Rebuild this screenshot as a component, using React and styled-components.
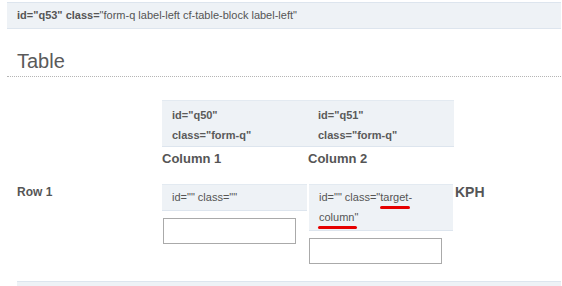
import React from "react";
import styled, { createGlobalStyle } from "styled-components";

const Global = createGlobalStyle`
  html, body { margin: 0; padding: 0; background: #fff; }
  body { font-family: "Liberation Sans", Arial, sans-serif; color: #555; }
`;

const Page = styled.div`
  padding: 2px 1px 0 7px;
  width: 554px;
  overflow: hidden;
  height: 284px;
`;

const InfoBar = styled.div`
  height: 25px;
  line-height: 25px;
  padding: 0 10px;
  background: #eef2f6;
  border-top: 1px solid #dde5ee;
  border-bottom: 1px solid #dde5ee;
  font-size: 11px;
  color: #555;
  white-space: nowrap;
`;

const Key = styled.b`
  font-weight: bold;
`;

const Heading = styled.h2`
  margin: 20px 0 0;
  padding: 0 10px 3px;
  font-size: 20px;
  line-height: 24px;
  font-weight: normal;
  color: #5a5a5a;
  border-bottom: 1px dotted #b5b5b5;
`;

const Body = styled.div`
  padding: 23px 0 0 10px;
`;

const Row = styled.div`
  display: flex;
  align-items: flex-start;
  margin-top: ${(p) => p.$top || 0}px;
`;

const RowLabel = styled.div`
  width: 145px;
  flex: none;
  font-size: 12px;
  line-height: 16px;
  font-weight: bold;
  color: #555;
`;

const Column = styled.div`
  width: 146px;
  flex: none;
  display: flex;
  flex-direction: column;
  align-items: flex-start;
`;

const HeadCell = styled.div`
  align-self: stretch;
  background: #eef2f6;
  border-top: 1px solid #e3eaf1;
  border-bottom: 1px solid #dde5ee;
  padding: 4px 10px 1px;
  font-size: 11px;
  line-height: 20px;
  font-weight: bold;
  color: #5a5a5a;
`;

const ColLabel = styled.div`
  padding-top: 3px;
  font-size: 13px;
  line-height: 18px;
  font-weight: bold;
  color: #555;
`;

const DataCell = styled.div`
  align-self: stretch;
  margin: ${(p) => (p.$first ? "0 1px 0 0" : "0 1px")};
  background: #eef2f6;
  border-top: 1px solid #e3eaf1;
  border-bottom: 1px solid #dde5ee;
  padding: 2px 10px 3px;
  font-size: 11px;
  line-height: 20px;
  color: #555;
`;

const Mark = styled.span`
  position: relative;
  &::after {
    content: "";
    position: absolute;
    left: ${(p) => p.$l}px;
    right: ${(p) => p.$r}px;
    bottom: -6px;
    height: 3px;
    border-radius: 2px;
    background: #e60000;
  }
`;

const Field = styled.input`
  margin: 7px 0 0 1px;
  width: 133px;
  height: 26px;
  box-sizing: border-box;
  border: 1px solid #aaa;
  background: #fff;
  padding: 0 4px;
  font: 12px "Liberation Sans", Arial, sans-serif;
  outline: none;
`;

const Unit = styled.div`
  margin-left: 1px;
  font-size: 14px;
  line-height: 16px;
  font-weight: bold;
  color: #555;
`;

const FooterBar = styled.div`
  margin: 17px 0 0 10px;
  height: 30px;
  background: #eef2f6;
  border-top: 1px solid #dde5ee;
`;

export default function App() {
  return (
    <>
      <Global />
      <Page>
        <InfoBar>
          <Key>id="q53" class=</Key>"form-q label-left cf-table-block label-left"
        </InfoBar>
        <Heading>Table</Heading>
        <Body>
          <Row>
            <RowLabel />
            <Column>
              <HeadCell>
                id="q50"
                <br />
                class="form-q"
              </HeadCell>
              <ColLabel>Column 1</ColLabel>
            </Column>
            <Column>
              <HeadCell>
                id="q51"
                <br />
                class="form-q"
              </HeadCell>
              <ColLabel>Column 2</ColLabel>
            </Column>
          </Row>
          <Row $top={16}>
            <RowLabel>Row 1</RowLabel>
            <Column>
              <DataCell $first>id="" class=""</DataCell>
              <Field type="text" />
            </Column>
            <Column>
              <DataCell>
                id="" class="<Mark $l={0} $r={2}>target-</Mark>
                <wbr />
                <Mark $l={-1} $r={-3}>column</Mark>"
              </DataCell>
              <Field type="text" />
            </Column>
            <Unit>KPH</Unit>
          </Row>
        </Body>
        <FooterBar />
      </Page>
    </>
  );
}
